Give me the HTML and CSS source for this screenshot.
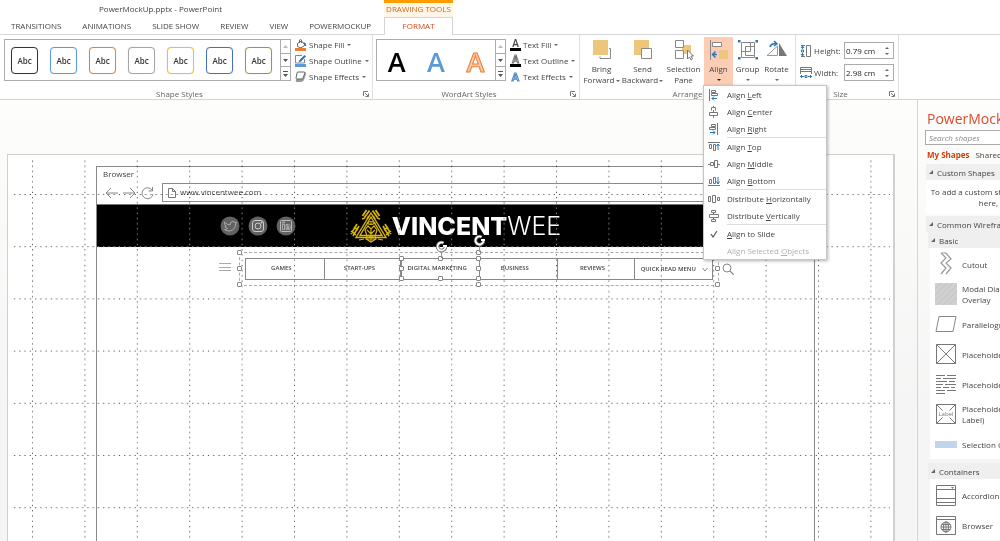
FILE: index.html
```html
<!DOCTYPE html>
<html lang="en">
<head>
  <meta charset="utf-8">
  <title>PowerMockUp.pptx - PowerPoint</title>
  <meta name="viewport" content="width=device-width, initial-scale=1">
  <link rel="stylesheet" href="styles.css">
</head>
<body>

  <header class="titlebar">
    <div class="doc-title">PowerMockUp.pptx - PowerPoint</div>
    <div class="context-title">DRAWING TOOLS</div>
  </header>

  <nav class="tabs">
    <a href="#">TRANSITIONS</a>
    <a href="#">ANIMATIONS</a>
    <a href="#">SLIDE SHOW</a>
    <a href="#">REVIEW</a>
    <a href="#">VIEW</a>
    <a href="#">POWERMOCKUP</a>
    <a href="#" class="active">FORMAT</a>
  </nav>

  <section class="ribbon">
    <div class="group shape-group">
      <div class="group-body">
        <div class="gallery">
          <div class="gallery-items shapes">
            <button class="swatch black">Abc</button>
            <button class="swatch blue">Abc</button>
            <button class="swatch orange">Abc</button>
            <button class="swatch gray">Abc</button>
            <button class="swatch gold">Abc</button>
            <button class="swatch navy">Abc</button>
            <button class="swatch green">Abc</button>
          </div>
          <div class="scroller">
            <button aria-label="Previous row"><svg width="5" height="3"><path d="M0 3L2.5 0L5 3z" fill="#bbb"/></svg></button>
            <button aria-label="Next row"><svg width="5" height="3"><path d="M0 0L2.5 3L5 0z" fill="#555"/></svg></button>
            <button aria-label="More"><svg width="5" height="6"><path d="M0 0h5v1H0zM0 3L2.5 6L5 3z" fill="#555"/></svg></button>
          </div>
        </div>
        <div class="commands">
          <button><svg width="12" height="12"><path d="M2.500 4.500l4-2.500 3.500 4-4 3-3.500-1.500zM4.500 4V1q1-1 2 0v3" fill="#fff" stroke="#666"/><path d="M8.500 3q3.500 1 2.500 4.500l-2-2z" fill="#2e75b6"/><path d="M0 9h11v3H0z" fill="#ed7d31"/></svg><span>Shape Fill</span><i class="caret"></i></button>
          <button><svg width="12" height="12"><path d="M7 .5H.5v7.500h9V4" fill="#fff" stroke="#888"/><path d="M3.500 7.500l1-2.500L9.500 0 11 1.500 6 6.500z" fill="#2e75b6"/><path d="M0 9h11v3H0z" fill="#5b9bd5"/></svg><span>Shape Outline</span><i class="caret"></i></button>
          <button><svg width="12" height="12"><path d="M3 4q0-3 3-3h4q1 0 1 2L9 9q-1 2-3 2H2q-2 0-1-2z" fill="#999"/><path d="M3 1h6q1 0 1 1L8 7q0 1-2 1H2Q1 8 1 7l1-5q0-1 1-1z" fill="#fff" stroke="#666"/></svg><span>Shape Effects</span><i class="caret"></i></button>
        </div>
      </div>
      <div class="group-label">Shape Styles</div>
      <button class="launcher" aria-label="Format shape"><svg width="6" height="6"><path d="M.5 5V.5H5M2 2l3 3M5.500 2.500v3h-3" fill="none" stroke="#777"/></svg></button>
    </div>

    <div class="group wordart-group">
      <div class="group-body">
        <div class="gallery">
          <div class="gallery-items letters">
            <button class="letter a-black">A</button>
            <button class="letter a-blue">A</button>
            <button class="letter a-orange">A</button>
          </div>
          <div class="scroller">
            <button aria-label="Previous row"><svg width="5" height="3"><path d="M0 3L2.5 0L5 3z" fill="#bbb"/></svg></button>
            <button aria-label="Next row"><svg width="5" height="3"><path d="M0 0L2.5 3L5 0z" fill="#555"/></svg></button>
            <button aria-label="More"><svg width="5" height="6"><path d="M0 0h5v1H0zM0 3L2.5 6L5 3z" fill="#555"/></svg></button>
          </div>
        </div>
        <div class="commands">
          <button><b class="text-icon bar">A</b><span>Text Fill</span><i class="caret"></i></button>
          <button><b class="text-icon bar hollow">A</b><span>Text Outline</span><i class="caret"></i></button>
          <button><b class="text-icon glow">A</b><span>Text Effects</span><i class="caret"></i></button>
        </div>
      </div>
      <div class="group-label">WordArt Styles</div>
      <button class="launcher" aria-label="Format text"><svg width="6" height="6"><path d="M.5 5V.5H5M2 2l3 3M5.500 2.500v3h-3" fill="none" stroke="#777"/></svg></button>
    </div>

    <div class="group arrange-group">
      <div class="group-body">
        <button class="big wide">
          <svg width="20" height="22"><path d="M17 9.500h1.500v10H8v-2" fill="none" stroke="#888"/><path d="M1 1h15v15H1z" fill="#edc57b"/></svg>
          <span>Bring<br>Forward<i class="caret"></i></span>
        </button>
        <button class="big wide">
          <svg width="20" height="22"><path d="M1 1h15v15H1z" fill="#edc57b"/><path d="M8.500 9.500h10v10h-10z" fill="#fff" stroke="#888"/></svg>
          <span>Send<br>Backward<i class="caret"></i></span>
        </button>
        <button class="big wide">
          <svg width="20" height="22"><path d="M8 6h9v9H8z" fill="#edc57b"/><path d="M1.500 1.500h8v7h-8zM1.500 11.500h8v8h-8z" fill="#fff" stroke="#888"/><path d="M13.500 11v9l2-2 1.500 3 1.500-1-1.500-3h2.500z" fill="#fff" stroke="#777"/></svg>
          <span>Selection<br>Pane</span>
        </button>
        <div class="dropdown">
          <button class="big open" aria-expanded="true">
            <svg width="20" height="22"><path d="M1.500 1v20" stroke="#888"/><path d="M3.500 3.500h9v4h-9z" fill="#fff" stroke="#888"/><path d="M10 11h9v9h-9z" fill="#edc57b"/><path d="M8 15.500H4M6.500 12.500L3.500 15.500l3 3" fill="none" stroke="#2e75b6" stroke-width="1.500"/></svg>
            <span>Align</span><i class="caret dark"></i>
          </button>
          <ul class="menu">
            <li><button><svg width="12" height="12"><path d="M1.500 0v12M3.500 1.500h4v2h-4zM3.500 4.500h6v2h-6z" fill="none" stroke="#777"/><path d="M9 9.500H4M6 7.500l-2 2 2 2" fill="none" stroke="#2e75b6"/></svg><span>Align <u>L</u>eft</span></button></li>
            <li><button><svg width="12" height="12"><path d="M3.500 4.500v-3h4v3M1.500 6.500h8v3h-8zM5.500 0v1M5.500 4v2M5.500 10v2" fill="none" stroke="#777"/></svg><span>Align <u>C</u>enter</span></button></li>
            <li><button><svg width="12" height="12"><path d="M9.500 0v12M3.500 1.500h4v2h-4zM1.500 4.500h6v2h-6z" fill="none" stroke="#777"/><path d="M2 9.500h5M5 7.500l2 2-2 2" fill="none" stroke="#2e75b6"/></svg><span>Align <u>R</u>ight</span></button></li>
            <li class="sep"><button><svg width="12" height="12"><path d="M0 1.500h12M1.500 3.500h2v4h-2zM5.500 3.500h2v6h-2z" fill="none" stroke="#777"/><path d="M10 9V3M8.500 5L10 3l1.500 2" fill="none" stroke="#2e75b6"/></svg><span>Align <u>T</u>op</span></button></li>
            <li><button><svg width="12" height="12"><path d="M2.500 4.500h3v3h-3zM6.500 2.500h3v7h-3zM0 6.500h2M10 6.500h2" fill="none" stroke="#777"/></svg><span>Align <u>M</u>iddle</span></button></li>
            <li><button><svg width="12" height="12"><path d="M0 10.500h12M1.500 4.500h2v4h-2zM5.500 2.500h2v6h-2z" fill="none" stroke="#777"/><path d="M10 2v7M8.500 6.500L10 9l1.500-2.500" fill="none" stroke="#2e75b6"/></svg><span>Align <u>B</u>ottom</span></button></li>
            <li class="sep"><button><svg width="12" height="12"><path d="M.5 3.500h2v5h-2zM4.500 2.500h3v7h-3zM9.500 4.500h2v3h-2z" fill="none" stroke="#777"/></svg><span>Distribute <u>H</u>orizontally</span></button></li>
            <li><button><svg width="12" height="12"><path d="M3.500.5h4v2h-4zM1.500 4.500h9v3h-9zM3.500 9.500h4v2h-4zM5.500 2v2M5.500 8v1" fill="none" stroke="#777"/></svg><span>Distribute <u>V</u>ertically</span></button></li>
            <li class="sep"><button><svg width="12" height="12"><path d="M3 6l2 3 4-6" fill="none" stroke="#555" stroke-width="1.200"/></svg><span><u>A</u>lign to Slide</span></button></li>
            <li><button disabled><svg width="12" height="12"></svg><span>Align Selected <u>O</u>bjects</span></button></li>
          </ul>
        </div>
        <button class="big">
          <svg width="20" height="22"><path d="M3.500 3.500h9v9h-9zM7.500 7.500h9v9h-9zM3.500 12v6.500h13v-2M12 3.500h4.500V8" fill="none" stroke="#888"/><path d="M0 1h2.500v2.500H0zM17.500 1H20v2.500h-2.500zM0 18h2.500v2.500H0zM17.500 18H20v2.500h-2.500z" fill="#2e75b6"/></svg>
          <span>Group</span><i class="caret"></i>
        </button>
        <button class="big">
          <svg width="22" height="22"><path d="M11.500 7v9.500H1z" fill="#fff" stroke="#999"/><path d="M13 4v13h8z" fill="#777"/><path d="M4 8q1-4 6-3M8 2l3 3-3 2" fill="none" stroke="#2e75b6" stroke-width="1.500"/></svg>
          <span>Rotate</span><i class="caret"></i>
        </button>
      </div>
      <div class="group-label">Arrange</div>
    </div>

    <div class="group size-group">
      <div class="group-body">
        <div class="size-row">
          <svg width="12" height="12"><path d="M6.500.5h4v11h-4zM5 .5h-4M5 11.500h-4" fill="#fff" stroke="#777"/><path d="M2.500 1v3M2.500 8v3M1 3l1.500-2L4 3M1 9l1.500 2L4 9M1.500 5h2v2h-2z" fill="none" stroke="#2e75b6"/></svg>
          <label for="height">Height:</label>
          <div class="spin"><input type="text" id="height" value="0.79 cm"><span><i class="up"></i><i class="down"></i></span></div>
        </div>
        <div class="size-row">
          <svg width="12" height="12"><path d="M.5.500h11v4H.5zM.5 4v3M11.500 4v3M1 2.500h10" fill="#fff" stroke="#777"/><path d="M0 9.500h4M8 9.500h4M2 8L.5 9.500 2 11M10 8l1.500 1.500L10 11M5 8.500h2v2H5z" fill="none" stroke="#2e75b6"/></svg>
          <label for="width">Width:</label>
          <div class="spin"><input type="text" id="width" value="2.98 cm"><span><i class="up"></i><i class="down"></i></span></div>
        </div>
      </div>
      <div class="group-label">Size</div>
      <button class="launcher" aria-label="Size and position"><svg width="6" height="6"><path d="M.5 5V.5H5M2 2l3 3M5.500 2.500v3h-3" fill="none" stroke="#777"/></svg></button>
    </div>
  </section>

  <main class="workspace">
    <section class="stage">
      <div class="slide">
        <div class="browser">
          <div class="browser-name">Browser</div>
          <div class="browser-bar">
            <svg width="50" height="14"><path d="M14 7H2M7 2L2 7l5 5M19 7h12M26 2l5 5-5 5M48 4a5.500 5.500 0 1 0 1 4M48.500 1v4h-4" fill="none" stroke="#888"/></svg>
            <div class="address">
              <svg width="8" height="10"><path d="M.5.5h4l3 3v6h-7zM4.500.5v3h3" fill="none" stroke="#777"/></svg>
              <span>www.vincentwee.com</span>
            </div>
          </div>
          <div class="site-head">
            <div class="social">
              <svg width="20" height="20"><circle cx="10" cy="10" r="9.500" fill="#626262"/><path d="M4.500 6q2.500 3 5.500 3 0-3.500 3-3.500 1 0 2 1l1.500-.5-1 2q0 6-6 7-3 0-5-1.500 2 0 3-1-2-.5-2.500-2h1Q4.500 9.500 4.500 6z" fill="none" stroke="#aaa"/></svg>
              <svg width="20" height="20"><circle cx="10" cy="10" r="9.500" fill="#626262"/><rect x="4.500" y="4.500" width="11" height="11" rx="2.500" fill="none" stroke="#ccc"/><circle cx="10" cy="10" r="3" fill="none" stroke="#ccc"/><circle cx="13.500" cy="6.500" r="1" fill="#ccc"/></svg>
              <svg width="20" height="20"><circle cx="10" cy="10" r="9.500" fill="#626262"/><rect x="4.500" y="4.500" width="11" height="11" rx="1" fill="none" stroke="#bbb"/><path d="M6.500 8.500h2v5h-2zM6.500 6h2v1h-2zM10 13.500v-5h1.500v1q2.500-2 2.500 1v3h-1.500v-3q-1-1-1 0v3z" fill="none" stroke="#bbb" stroke-width=".8"/></svg>
            </div>
            <div class="brand">
              <svg width="42" height="34" fill="none" stroke="#d9b40c">
                <path d="M21 4L6 28.500h30zM21 8L10 26.500h22z" stroke-width="1.400"/>
                <path d="M12.500 7l4-6M14.500 8.500l5-7M12 10l3-1M29.500 7l-4-6M27.500 8.500l-5-7M30 10l-3-1M17 10l2-3M25 10l-2-3" stroke-width="1.800"/>
                <path d="M1 25l6-10M3 27l6-10M1 22l5 4M4 18l4 3M41 25l-6-10M39 27l-6-10M41 22l-5 4M38 18l-4 3" stroke-width="1.600"/>
                <path d="M17 14q4-3 8 0-4 3-8 0M20 14h2M15 21l3-4 3 3 3-3 3 4-2 6 1 3-5 3-5-3 1-3zM17 21l4 4 4-4M18 26l3 3 3-3M21 20v12M16 30h10M9 31l5-1M33 31l-5-1" stroke-width="1.200"/>
              </svg>
              <span class="brand-name"><b>VINCENT</b>WEE</span>
            </div>
          </div>
          <div class="site-nav">
            <svg class="burger" width="12" height="10"><path d="M0 1.500h12M0 5.500h12M0 8.500h12" stroke="#aaa"/></svg>
            <div class="selection">
              <div class="nav-items">
                <a href="#">GAMES</a>
                <a href="#">START-UPS</a>
                <a href="#" class="picked">DIGITAL MARKETING
                  <i class="knob tl"></i><i class="knob tc"></i><i class="knob ml"></i><i class="knob bl"></i><i class="knob bc"></i><i class="knob tr"></i><i class="knob mr"></i><i class="knob br"></i>
                  <svg class="turn" width="12" height="18"><path d="M6.500 11v7" stroke="#999"/><path d="M8.500 3a4 4 0 1 0 2 4" fill="none" stroke="#666" stroke-width="3.500"/><path d="M8.500 3a4 4 0 1 0 2 4M8 6h4" fill="none" stroke="#fff" stroke-width="1.800"/></svg>
                </a>
                <a href="#">BUSINESS</a>
                <a href="#">REVIEWS</a>
                <a href="#" class="more">QUICK READ MENU <svg width="6" height="5"><path d="M.5 1L3 4 5.500 1" fill="none" stroke="#888"/></svg></a>
              </div>
              <i class="knob tl"></i><i class="knob tc"></i><i class="knob ml"></i><i class="knob bl"></i><i class="knob bc"></i><i class="knob tr"></i><i class="knob mr"></i><i class="knob br"></i>
              <svg class="turn" width="12" height="18"><path d="M6.500 11v7" stroke="#999"/><path d="M8.500 3a4 4 0 1 0 2 4" fill="none" stroke="#666" stroke-width="3.500"/><path d="M8.500 3a4 4 0 1 0 2 4M8 6h4" fill="none" stroke="#fff" stroke-width="1.800"/></svg>
            </div>
            <svg width="12" height="12"><circle cx="5" cy="5" r="4" fill="none" stroke="#888"/><path d="M8 8l4 4" stroke="#888" stroke-width="1.200"/></svg>
          </div>
        </div>
        <svg class="grid">
          <defs>
            <!-- one ruler cell, a dot every 5.24px along the top and left edge -->
            <pattern id="cell" x="21" y="36" width="52.400" height="52.200" patternUnits="userSpaceOnUse">
              <path d="M3 .5h50" stroke="#aaa" stroke-dasharray="1.200 4.040"/>
              <path d="M.5 3v50" stroke="#aaa" stroke-dasharray="1.200 4.020"/>
            </pattern>
          </defs>
          <rect width="100%" height="100%" fill="url(#cell)"/>
        </svg>
      </div>
    </section>

    <aside class="panel">
      <h1>PowerMockUp</h1>
      <input type="text" class="search" placeholder="Search shapes" aria-label="Search shapes">
      <div class="panel-tabs"><a href="#" class="on">My Shapes</a><a href="#">Shared</a></div>
      <h2>Custom Shapes</h2>
      <p>To add a custom shape, drag and drop it<br>here, and save</p>
      <h2>Common Wireframe</h2>
      <div class="library">
        <h3>Basic</h3>
        <ul>
          <li><svg width="22" height="24"><path d="M6 1l5 5-5 5 5 5-5 6M11 1l5 6-5 4 5 5-5 6M6 1l5 0" fill="none" stroke="#999" stroke-width="1.200"/></svg>Cutout</li>
          <li><svg width="22" height="24"><path d="M0 1h22v22H0z" fill="#d0d0d0"/><path d="M0 7l6-6M0 13L12 1M0 19L18 1M2 23L22 3M8 23L22 9M14 23l8-8" stroke="#c2c2c2"/></svg>Modal Dialog<br>Overlay</li>
          <li><svg width="22" height="24"><path d="M4 4.500h17l-3 15H1z" fill="#fff" stroke="#888"/></svg>Parallelogram</li>
          <li><svg width="22" height="24"><path d="M1.500 2.500h19v19h-19zM1.500 2.500l19 19M20.500 2.500l-19 19" fill="#fff" stroke="#777"/></svg>Placeholder</li>
          <li><svg width="22" height="24"><path d="M1 3.500h9M12 3.500h9M1 6.500h5M8 6.500h13M1 9.500h11M14 9.500h6M1 12.500h7M10 12.500h11M1 15.500h5M8 15.500h6M16 15.500h4M1 18.500h9M12 18.500h9M1 21.500h9" stroke="#777" stroke-width="1.200"/></svg>Placeholder</li>
          <li><svg width="22" height="24"><path d="M1.500 2.500h19v19h-19zM1.500 2.500l6 6M20.500 2.500l-6 6M1.500 21.500l6-6M20.500 21.500l-6-6" fill="#fff" stroke="#777"/><text x="11" y="14" class="tiny">Label</text></svg>Placeholder (<br>Label)</li>
          <li><svg width="22" height="24"><path d="M0 9h22v7H0z" fill="#c0d4ee"/></svg>Selection C</li>
        </ul>
        <h3>Containers</h3>
        <ul>
          <li><svg width="22" height="24"><path d="M1.500 2.500h19v20h-19zM1.500 6.500h19M1.500 15.500h19M1.500 19.500h19" fill="#fff" stroke="#777"/><path d="M16 4h3l-1.500 2z" fill="#777"/></svg>Accordion</li>
          <li><svg width="22" height="24"><path d="M1.500 3.500h19v18h-19zM1.500 6.500h19" fill="#fff" stroke="#777"/><circle cx="11" cy="14" r="5" fill="#fff" stroke="#777"/><path d="M6 14h10M11 9v10M7 11.500h8M7 16.500h8" stroke="#777"/><ellipse cx="11" cy="14" rx="2.500" ry="5" fill="none" stroke="#777"/></svg>Browser</li>
        </ul>
      </div>
    </aside>
  </main>

</body>
</html>
```

FILE: styles.css
```css
* {
  box-sizing: border-box;
}
body {
  margin: 0;
  height: 100vh;
  display: flex;
  flex-direction: column;
  overflow: hidden;
  font-family: "Open Sans", "Noto Sans", sans-serif;
  font-size: 8px;
  line-height: 11px;
  color: #444;
  background: #fff;
}
button {
  font: inherit;
  color: inherit;
  background: none;
  border: 0;
  padding: 0;
  cursor: pointer;
}
a {
  color: inherit;
  text-decoration: none;
}
svg {
  display: block;
  flex: none;
}
ul {
  list-style: none;
  margin: 0;
  padding: 0;
}

/* title bar and tabs */
.titlebar {
  display: flex;
  height: 17px;
  line-height: 18px;
}
.doc-title {
  width: 384px;
  padding-left: 99px;
}
.context-title {
  width: 69px;
  border-top: 3px solid #ff9c00;
  background: #fff6e8;
  color: #d3641b;
  text-align: center;
  line-height: 12px;
}
.tabs {
  display: flex;
  height: 18px;
  gap: 21px;
  padding-left: 11px;
  line-height: 18px;
  border-bottom: 1px solid #d5d5d5;
}
.tabs .active {
  width: 69px;
  margin-left: -8px;
  height: 18px;
  text-align: center;
  color: #d0491a;
  background: #fff;
  border: 1px solid #d5d5d5;
  border-bottom: 0;
  line-height: 16px;
}

/* ribbon */
.ribbon {
  display: flex;
  height: 65px;
  flex: none;
  border-bottom: 1px solid #d5d5d5;
}
.group {
  position: relative;
  display: flex;
  flex-direction: column;
  justify-content: space-between;
  padding: 4px 4px 0;
  border-right: 1px solid #e1e1e1;
}
.group-body {
  display: flex;
}
.group-label {
  text-align: center;
  color: #666;
  line-height: 11px;
  padding-right: 13px;
}
.shape-group {
  width: 373px;
}
.wordart-group {
  width: 207px;
  padding-left: 3px;
}
.arrange-group {
  width: 216px;
  padding: 2px 1px 0;
}
.arrange-group .group-label {
  padding-right: 0;
}
.size-group {
  width: 103px;
}
.launcher {
  position: absolute;
  right: 3px;
  bottom: 2px;
}
.gallery {
  display: flex;
  height: 42px;
  border: 1px solid #ababab;
}
.gallery-items {
  display: flex;
  align-items: center;
}
.shapes {
  width: 275px;
  padding: 0 6px;
  gap: 12px;
}
.swatch {
  width: 27px;
  height: 27px;
  border: 1px solid;
  border-radius: 4px;
  background: #fff;
  font-weight: 600;
  color: #333;
  box-shadow: 0 0 1px #ccc;
}
.swatch.black { border-color: #333; }
.swatch.blue { border-color: #5b9bd5; }
.swatch.orange { border-color: #ed7d31; }
.swatch.gray { border-color: #a5a5a5; }
.swatch.gold { border-color: #ffc000; }
.swatch.navy { border-color: #4472c4; }
.swatch.green { border-color: #70ad47; }
.letters {
  width: 118px;
}
.letter {
  flex: 1;
  font-size: 27px;
  line-height: 34px;
  font-weight: 600;
  padding-top: 4px;
}
.a-black { color: #000; }
.a-blue { color: #5b9bd5; }
.a-orange {
  color: #f8cbad;
  -webkit-text-stroke: 1px #ed7d31;
}
.scroller {
  display: flex;
  flex-direction: column;
  width: 10px;
  border-left: 1px solid #ababab;
}
.scroller button {
  flex: 1;
  display: flex;
  align-items: center;
  justify-content: center;
}
.scroller button + button {
  border-top: 1px solid #ababab;
}
.commands {
  display: flex;
  flex-direction: column;
  gap: 4px;
  padding-left: 4px;
}
.commands button {
  display: flex;
  align-items: center;
  height: 12px;
  gap: 2px;
  white-space: nowrap;
}
.commands span {
  padding-bottom: 2px;
}
.caret {
  display: inline-block;
  border: 2px solid transparent;
  border-top-color: #666;
  border-bottom: 0;
  margin-left: 1px;
  vertical-align: middle;
}
.caret.dark {
  border-top-color: #222;
}
.text-icon {
  width: 11px;
  height: 12px;
  font-size: 10px;
  line-height: 9px;
  font-weight: 600;
  text-align: center;
}
.text-icon.bar {
  border-bottom: 3px solid #000;
}
.text-icon.hollow {
  color: #fff;
  -webkit-text-stroke: 1px #777;
}
.text-icon.glow {
  color: #fff;
  font-size: 11px;
  line-height: 12px;
  -webkit-text-stroke: 1px #4a86c8;
}
.big {
  display: flex;
  flex-direction: column;
  align-items: center;
  width: 29px;
  height: 49px;
  padding-top: 2px;
}
.big svg {
  margin-bottom: 2px;
}
.big.wide {
  width: 41px;
  white-space: nowrap;
}
.big > .caret {
  margin: 5px 0 0;
}
.open {
  background: #fbcdb5;
}

/* align menu */
.dropdown {
  position: relative;
}
.menu {
  position: absolute;
  z-index: 5;
  left: -1px;
  top: 48px;
  width: 124px;
  background: #fff;
  border: 1px solid #c6c6c6;
  box-shadow: 1px 1px 3px rgba(0,0,0,0.3);
}
.menu li {
  position: relative;
}
.menu button {
  display: flex;
  align-items: center;
  gap: 7px;
  width: 100%;
  height: 17px;
  padding-left: 4px;
  white-space: nowrap;
}
.menu .sep {
  padding-top: 1px;
  background: linear-gradient(#ddd, #ddd) 23px 0 / 100% 1px no-repeat;
}
.menu button:disabled {
  color: #b0b0b0;
}

/* size fields */
.size-group .group-body {
  flex-direction: column;
  gap: 5px;
  padding-top: 3px;
}
.size-row {
  display: flex;
  align-items: center;
  gap: 2px;
}
.size-row label {
  flex: 1;
}
.spin {
  display: flex;
  width: 50px;
  height: 17px;
  border: 1px solid #ababab;
}
.spin input {
  width: 36px;
  border: 0;
  padding: 0 0 0 1px;
  font: inherit;
  color: #222;
  outline: 0;
}
.spin span {
  display: flex;
  flex-direction: column;
  justify-content: center;
  gap: 4px;
  padding-left: 4px;
}
.up, .down {
  border: 2px solid transparent;
}
.up {
  border-top: 0;
  border-bottom-color: #666;
}
.down {
  border-bottom: 0;
  border-top-color: #666;
}

/* slide area */
.workspace {
  flex: 1;
  display: flex;
  min-height: 0;
  background: linear-gradient(#fdfdfb, #f5f5f5 70%);
}
.stage {
  flex: 1;
  display: flex;
  padding: 54px 22px 0 7px;
}
.slide {
  position: relative;
  flex: 1;
  display: flex;
  padding: 11px 78px 0 88px;
  background: #fff;
  border: 1px solid #d0d0d0;
  border-right-width: 2px;
  border-bottom: 0;
}
.grid {
  position: absolute;
  left: 3px;
  top: 3px;
  width: calc(100% - 6px);
  height: 100%;
  pointer-events: none;
  mix-blend-mode: difference;
}
.browser {
  flex: 1;
  border: 1px solid #8a8a8a;
  border-bottom: 0;
}
.browser-name {
  padding: 0 6px 2px;
  line-height: 13px;
}
.browser-bar {
  display: flex;
  align-items: center;
  gap: 8px;
  padding: 1px 6px 2px 7px;
}
.address {
  flex: 1;
  display: flex;
  align-items: center;
  gap: 4px;
  height: 19px;
  padding-left: 5px;
  border: 1px solid #8a8a8a;
}
.address span {
  padding-bottom: 2px;
}
.site-head {
  display: grid;
  grid-template-columns: 1fr auto 1fr;
  align-items: center;
  height: 43px;
  background: #000;
  border-top: 1px solid #777;
}
.social {
  display: flex;
  gap: 8px;
  justify-self: end;
  margin-right: 54px;
}
.brand {
  display: flex;
  align-items: center;
  color: #fff;
}
.brand-name {
  font-family: Inter, sans-serif;
  font-size: 25px;
  line-height: 34px;
  font-weight: 300;
}
.brand-name b {
  font-weight: 800;
}
.site-nav {
  display: flex;
  align-items: center;
  padding: 5px 0 0 122px;
}
.burger {
  margin: 0 8px 4px 0;
}
.selection {
  position: relative;
  width: 480px;
  padding: 5px;
  border: 1px dashed #aaa;
  margin-right: 3px;
}
.nav-items {
  display: grid;
  grid-template-columns: repeat(6, 1fr);
  border: 1px solid #888;
}
.nav-items a {
  position: relative;
  height: 20px;
  padding-right: 7px;
  font-size: 6px;
  line-height: 19px;
  font-weight: 600;
  text-align: center;
  white-space: nowrap;
}
.nav-items a + a {
  border-left: 1px solid #888;
}
.nav-items .picked {
  outline: 1px solid #888;
}
.nav-items .more {
  display: flex;
  align-items: center;
  justify-content: flex-end;
  gap: 6px;
  padding-right: 4px;
}

/* selection handles */
.knob {
  position: absolute;
  z-index: 2;
  width: 5px;
  height: 5px;
  margin: -3px;
  background: #fff;
  border: 1px solid #888;
  border-radius: 1px;
}
.tl, .tc, .tr { top: 0; }
.bl, .bc, .br { top: 100%; }
.ml, .mr { top: 50%; }
.tl, .ml, .bl { left: 0; }
.tc, .bc { left: 50%; }
.tr, .mr, .br { left: 100%; }
.turn {
  position: absolute;
  z-index: 2;
  left: calc(50% - 6px);
  top: -19px;
}

/* shapes panel */
.panel {
  width: 83px;
  flex: none;
  overflow: hidden;
  white-space: nowrap;
  padding: 9px 0 0 8px;
  border-left: 1px solid #d5d5d5;
}
.panel h1 {
  margin: 0 0 2px 1px;
  font-size: 14px;
  line-height: 19px;
  font-weight: 400;
  color: #dc4a2c;
}
.search {
  width: 160px;
  height: 15px;
  margin-left: -1px;
  padding: 0 3px;
  border: 1px solid #ababab;
  font: inherit;
  display: block;
}
.search::placeholder {
  font-style: italic;
  color: #888;
}
.panel-tabs {
  display: flex;
  gap: 6px;
  padding: 4px 1px;
}
.panel-tabs .on {
  font-weight: 700;
  color: #d83b01;
}
.panel h2, .panel h3 {
  display: flex;
  align-items: center;
  gap: 4px;
  height: 16px;
  margin: 0;
  padding-left: 3px;
  font-size: 8px;
  font-weight: 400;
  background: #efefef;
}
.panel h2::before, .panel h3::before {
  content: "";
  border-left: 4px solid transparent;
  border-bottom: 4px solid #666;
}
.panel p {
  width: 160px;
  margin: 0 0 2px;
  padding: 6px 0;
  text-align: center;
  background: #fff;
}
.library {
  padding-left: 2px;
}
.library ul {
  margin: 0 0 4px 2px;
  padding: 1px 0 0 3px;
  background: #fff;
}
.library li {
  display: grid;
  grid-template-columns: 22px 1fr;
  align-items: center;
  column-gap: 5px;
  height: 30px;
  padding-left: 2px;
}
.tiny {
  font-size: 6px;
  text-anchor: middle;
  fill: #777;
}
```
